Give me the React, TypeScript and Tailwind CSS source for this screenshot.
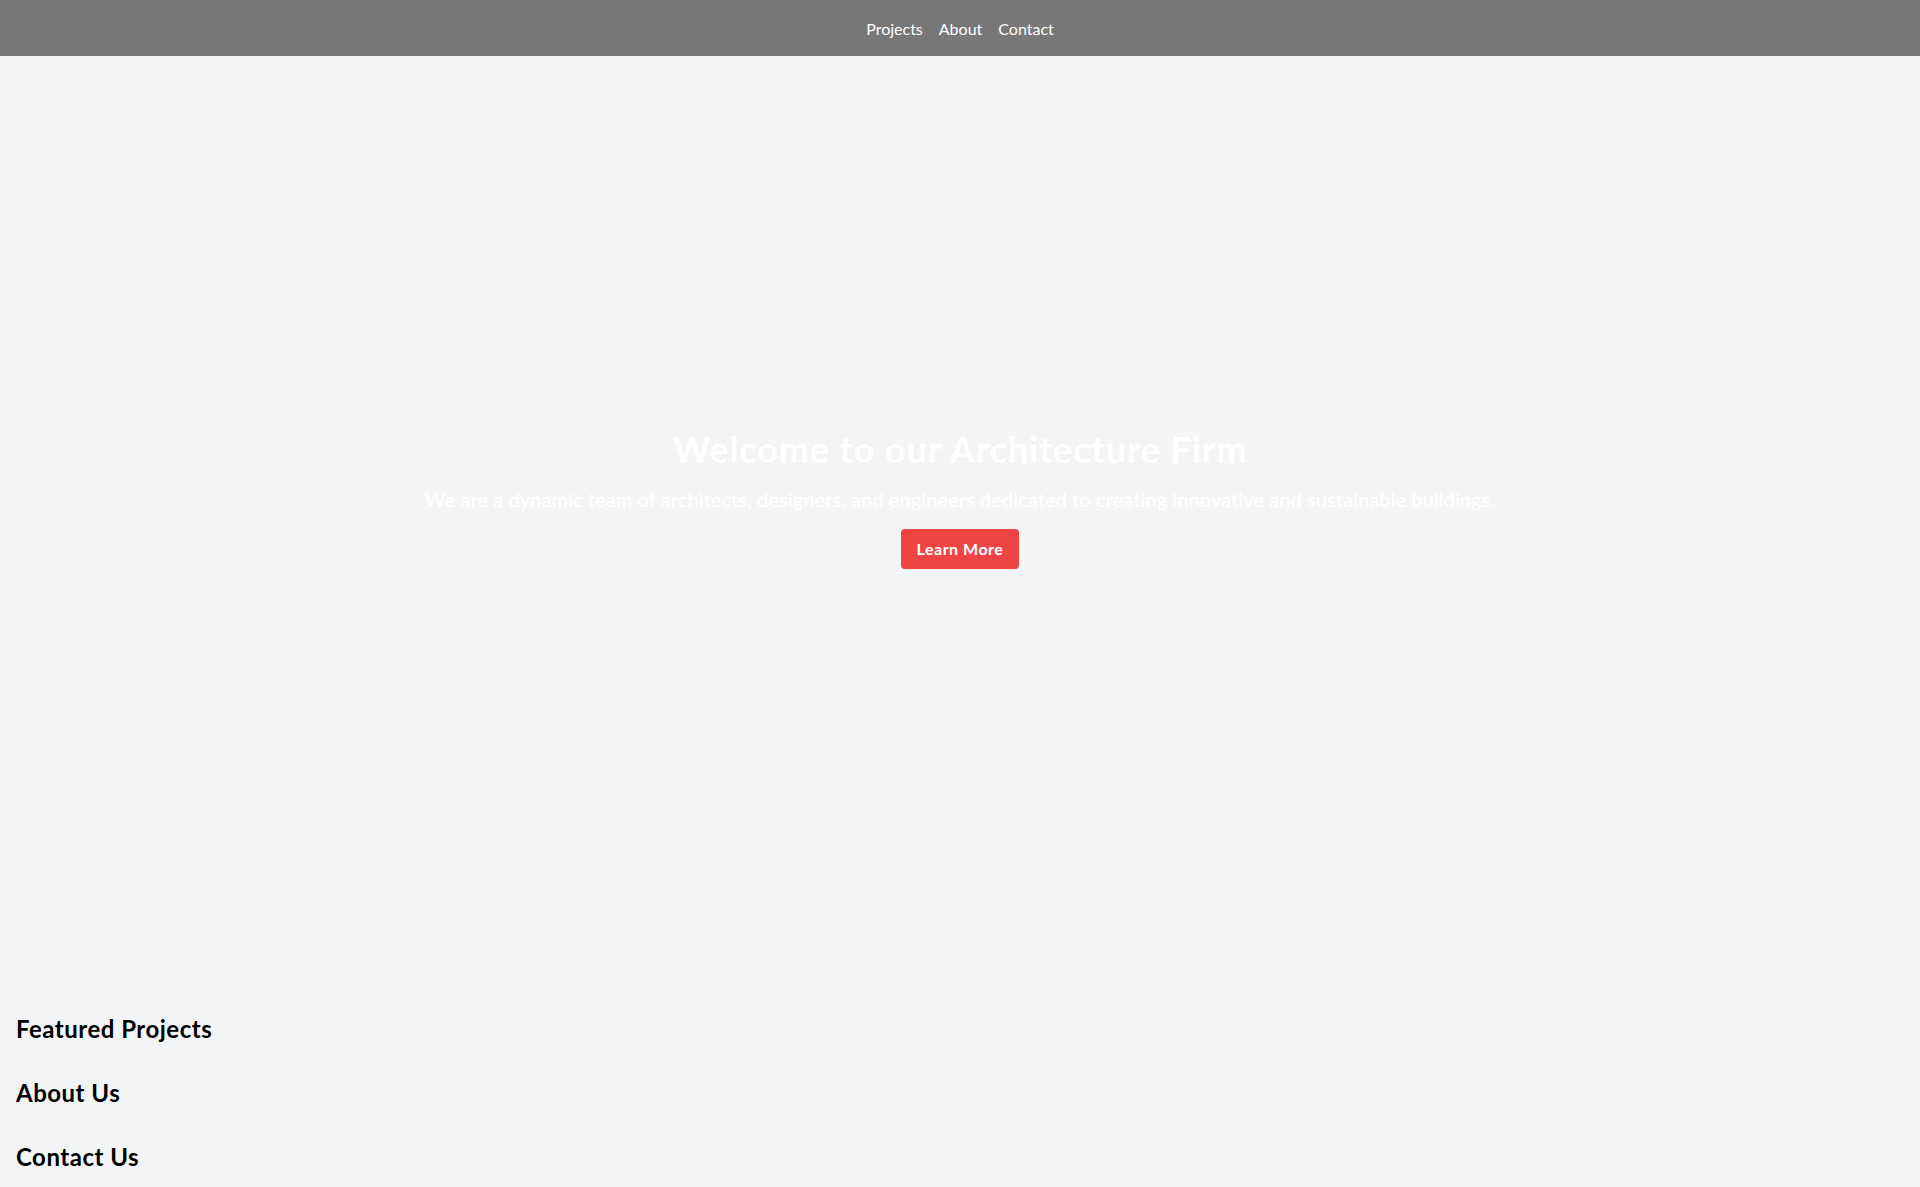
import React from 'react';

export default function App() {
  return (
    <div className="min-h-screen bg-[#f3f4f6] font-['Lato',_'Open_Sans',_sans-serif]">
      {/* Nav */}
      <nav className="fixed top-0 left-0 w-full bg-[#777777] pt-[17px] pb-[15px] z-10">
        <ul className="flex justify-center space-x-4 text-base leading-6 text-white">
          <li><a href="#projects">Projects</a></li>
          <li><a href="#about">About</a></li>
          <li><a href="#contact">Contact</a></li>
        </ul>
      </nav>

      {/* Hero */}
      <header className="h-[997px] bg-cover bg-center flex flex-col items-center justify-center text-center">
        <h1 className="text-4xl font-bold tracking-[0.9px] text-white mb-4">Welcome to our Architecture Firm</h1>
        <p className="text-xl tracking-[0.1px] text-white mb-4">
          We are a dynamic team of architects, designers, and engineers dedicated to creating innovative and sustainable buildings.
        </p>
        <button className="bg-[#ef4444] text-white font-bold tracking-[0.5px] py-2 px-4 rounded">Learn More</button>
      </header>

      <section id="projects" className="p-4">
        <h2 className="text-2xl font-bold tracking-[0.5px] text-black">Featured Projects</h2>
      </section>
      <section id="about" className="p-4">
        <h2 className="text-2xl font-bold tracking-[0.5px] text-black">About Us</h2>
      </section>
      <section id="contact" className="p-4">
        <h2 className="text-2xl font-bold tracking-[0.5px] text-black">Contact Us</h2>
      </section>
    </div>
  );
}
